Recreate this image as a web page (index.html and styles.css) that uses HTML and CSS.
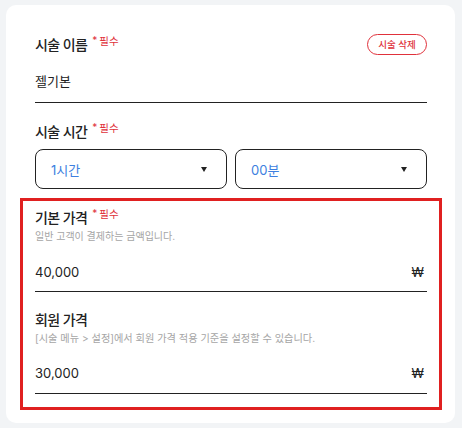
FILE: index.html
```html
<!DOCTYPE html>
<html lang="ko">
<head>
<meta charset="utf-8">
<link rel="stylesheet" href="styles.css">
</head>
<body>
<div class="card">
  <div class="head-row">
    <div class="label">시술 이름 <span class="req"><span class="star">*</span>필수</span></div>
    <button class="del-btn">시술 삭제</button>
  </div>
  <div class="line-input name-input"><span class="val">젤기본</span></div>

  <div class="label time-label">시술 시간 <span class="req"><span class="star">*</span>필수</span></div>
  <div class="selects">
    <div class="select"><span class="sel-val">1시간</span><span class="caret"></span></div>
    <div class="select"><span class="sel-val">00분</span><span class="caret"></span></div>
  </div>

  <div class="highlight">
    <div class="label">기본 가격 <span class="req"><span class="star">*</span>필수</span></div>
    <div class="help">일반 고객이 결제하는 금액입니다.</div>
    <div class="line-input price-input"><span class="val">40,000</span><span class="won">₩</span></div>

    <div class="label member-label">회원 가격</div>
    <div class="help help2">[시술 메뉴 &gt; 설정]에서 회원 가격 적용 기준을 설정할 수 있습니다.</div>
    <div class="line-input price-input"><span class="val">30,000</span><span class="won">₩</span></div>
  </div>
</div>
</body>
</html>
```

FILE: styles.css
```css
* { box-sizing: border-box; }
html, body { margin: 0; padding: 0; }
body {
  background: #f2f4f6;
  font-family: Inter, "Noto Sans CJK KR", sans-serif;
  color: #222;
  width: 462px;
  height: 428px;
  padding: 5px 7px 5px 6px;
}
.card {
  background: #fff;
  border-radius: 10px;
  height: 418px;
  padding: 29px 28px 0 29px;
}
.head-row {
  display: flex;
  justify-content: space-between;
  align-items: center;
  height: 21px;
}
.label {
  font-size: 14px;
  font-weight: 500;
  letter-spacing: -0.6px;
  line-height: 20px;
  color: #222;
  display: flex;
  align-items: flex-start;
  gap: 5px;
}
.req {
  font-size: 10.5px;
  letter-spacing: 0;
  line-height: 14px;
  color: #e0313b;
  font-weight: 400;
  margin-top: -1px;
}
.star { font-size: 10px; margin-right: 2px; position: relative; top: -1px; }
.del-btn {
  width: 60px;
  height: 21px;
  border: 1px solid #e0313b;
  border-radius: 11px;
  background: #fff;
  color: #e0313b;
  font-family: inherit;
  font-size: 9.5px;
  font-weight: 500;
  padding: 0;
  line-height: 19px;
}
.line-input {
  display: flex;
  align-items: center;
  justify-content: space-between;
  border-bottom: 1.5px solid #222;
  font-size: 13px;
  color: #222;
}
.name-input { margin-top: 7px; height: 41px; padding-bottom: 4px; }
.time-label { margin-top: 19px; }
.selects {
  display: grid;
  grid-template-columns: 1fr 1fr;
  gap: 8px;
  margin-top: 7px;
}
.select {
  height: 40px;
  border: 1px solid #222;
  border-radius: 8px;
  display: flex;
  align-items: center;
  justify-content: space-between;
  padding: 0 19px 0 15px;
}
.sel-val { color: #3d7fe0; font-size: 13px; }
.caret {
  width: 0; height: 0;
  border-left: 3.5px solid transparent;
  border-right: 3.5px solid transparent;
  border-top: 5px solid #222;
}
.highlight {
  margin: 9px -15px 0 -15px;
  border: 3px solid #e02020;
  padding: 7px 12px 13px 12px;
}
.help {
  font-size: 10px;
  color: #a5a5a5;
  line-height: 16px;
  margin-top: 0;
}
.help2 { font-size: 10.2px; margin-top: 0; }
.price-input { height: 48px; padding-top: 8px; }
.member-label { margin-top: 17.5px; }
.won { font-size: 13px; margin-right: 3px; }
```
